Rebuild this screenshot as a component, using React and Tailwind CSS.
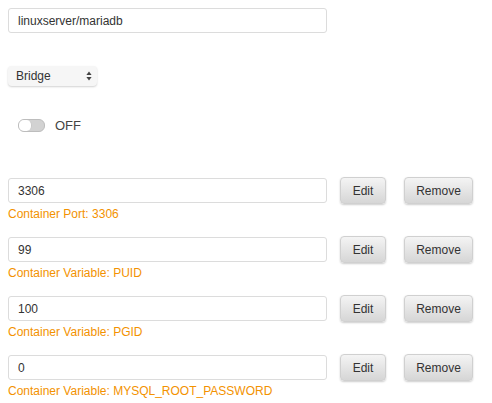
const rows = [
	{ value: '3306', label: 'Container Port: 3306' },
	{ value: '99', label: 'Container Variable: PUID' },
	{ value: '100', label: 'Container Variable: PGID' },
	{ value: '0', label: 'Container Variable: MYSQL_ROOT_PASSWORD' },
]

const btn = 'h-[27px] rounded-[4px] border border-[#d0d0d0] bg-gradient-to-b from-[#f4f4f4] to-[#d6d6d6] shadow-[0_1px_2px_rgba(0,0,0,0.2)] text-[12px] text-[#333] pt-[1px]'

export default function App() {
	return (
		<div className="w-[492px] h-[403px] bg-white pl-2 pt-2 font-['Liberation_Sans',Arial,sans-serif] text-[#333]">
			<input
				className="block w-[319px] h-[25px] border border-[#dcdcdc] rounded-[3px] px-[9px] pt-[1px] text-[12px] text-[#333] outline-none"
				defaultValue="linuxserver/mariadb"
			/>
			<div className="mt-[33px] w-[89px] h-[20px] rounded-[4px] bg-[#f6f6f6] shadow-[0_1px_2px_rgba(0,0,0,0.18)] flex items-center justify-between pl-2 pr-[5px] text-[12px]">
				<span>Bridge</span>
				<svg width="6" height="10" viewBox="0 0 6 10">
					<path d="M3 0.5 L5.6 4 H0.4 Z" fill="#444" />
					<path d="M3 9.5 L5.6 6 H0.4 Z" fill="#444" />
				</svg>
			</div>
			<div className="mt-[30px] ml-[10px] flex items-center gap-[10px]">
				<div className="w-[27px] h-[13px] rounded-[6px] border border-[#bdbdbd] bg-[#d2d2d2] relative">
					<div className="absolute left-0 top-0 w-[13px] h-[11px] rounded-[5px] bg-white border-r border-[#c8c8c8]" />
				</div>
				<span className="text-[13px] text-[#444]">OFF</span>
			</div>
			<div className="mt-[41px] flex flex-col gap-[15px]">
				{rows.map(r => (
					<div key={r.label}>
						<div className="flex items-center">
							<input
								className="block w-[319px] h-[25px] border border-[#dcdcdc] rounded-[3px] px-[9px] pt-[1px] text-[12px] text-[#333] outline-none"
								defaultValue={r.value}
							/>
							<button className={`${btn} ml-[13px] w-[46px]`}>Edit</button>
							<button className={`${btn} ml-[18px] w-[69px]`}>Remove</button>
						</div>
						<div className="text-[12px] leading-[14px] text-[#f39200] mt-[3px]">{r.label}</div>
					</div>
				))}
			</div>
		</div>
	)
}
